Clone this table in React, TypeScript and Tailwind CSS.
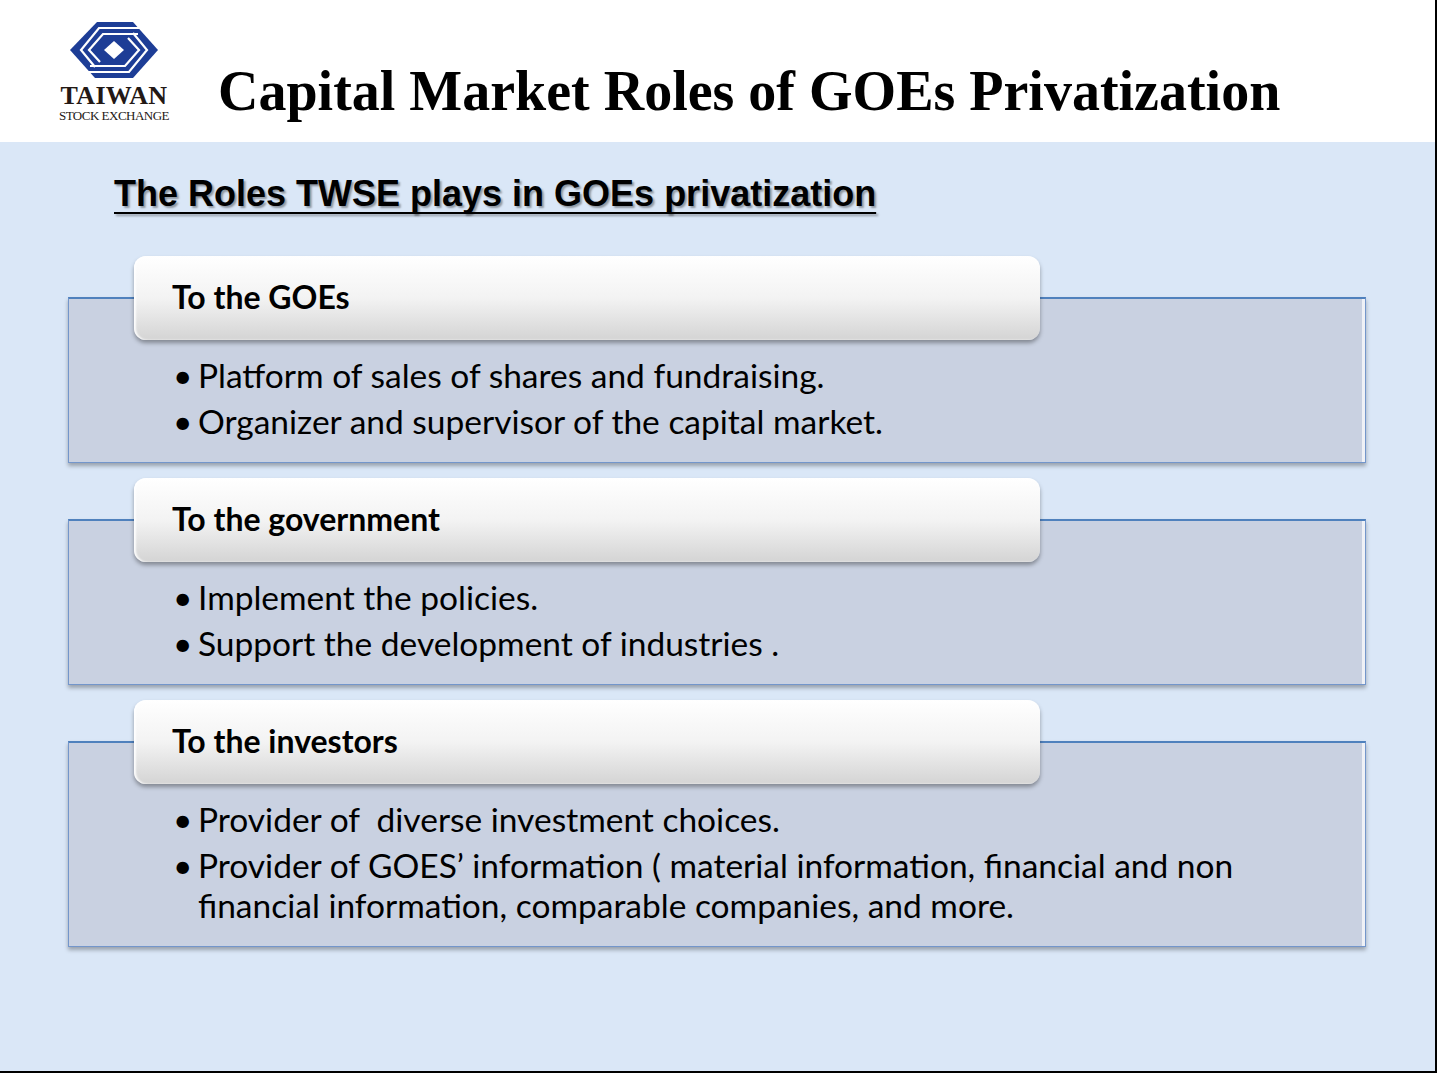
import React from 'react';

interface Role {
  title: string;
  height: string;
  items: React.ReactNode[];
}

const roles: Role[] = [
  {
    title: 'To the GOEs',
    height: 'h-[166px]',
    items: [
      'Platform of sales of shares and fundraising.',
      'Organizer and supervisor of the capital market.',
    ],
  },
  {
    title: 'To the government',
    height: 'h-[166px]',
    items: ['Implement the policies.', 'Support the development of industries .'],
  },
  {
    title: 'To the investors',
    height: 'h-[206px]',
    items: [
      'Provider of \u00a0diverse investment choices.',
      <>
        Provider of GOES’ information ( material information, financial and non
        <br />
        financial information, comparable companies, and more.
      </>,
    ],
  },
];

const Logo = () => (
  <div className="flex flex-col items-center w-[112px]">
    <svg width="88" height="56" viewBox="0 0 88 56" className="block">
      <polygon points="0,28 27,0 63,0 88,28 63,56 25,56" fill="#1d3d96" />
      {/* upper-left C */}
      <polyline points="76,6 29,6 11,28 25,45" fill="none" stroke="#fff" strokeWidth="2.2" />
      <polyline points="68,12 33,12 19,28 30,40" fill="none" stroke="#fff" strokeWidth="2.2" />
      {/* lower-right C */}
      <polyline points="12,50 59,50 77,28 63,11" fill="none" stroke="#fff" strokeWidth="2.2" />
      <polyline points="20,44 55,44 69,28 58,16" fill="none" stroke="#fff" strokeWidth="2.2" />
      <polygon points="44,19 54,28 44,37 34,28" fill="#fff" />
    </svg>
    <div className="mt-[7px] text-[26px] leading-[22px] font-bold tracking-[0.3px] text-[#231815] [font-family:'Liberation_Serif',serif]">
      TAIWAN
    </div>
    <div className="mt-[2px] text-[13px] leading-[14px] tracking-[-0.5px] text-[#231815] [font-family:'Liberation_Serif',serif]">
      STOCK EXCHANGE
    </div>
  </div>
);

const RoleBlock = ({ role, first }: { role: Role; first: boolean }) => (
  <div className={first ? '' : 'mt-[15px]'}>
    <div className="relative z-10 ml-[66px] w-[906px] h-[84px] flex items-center pl-[38px] pb-[2px] rounded-[12px] bg-linear-to-b from-white via-[#f3f3f3] to-[#d4d4d4] shadow-[0_3px_4px_rgba(0,0,0,0.35),inset_2px_0_2px_rgba(255,255,255,0.9)]">
      <span className="text-[32px] font-bold text-black [font-family:Lato,sans-serif]">{role.title}</span>
    </div>
    <div
      className={`-mt-[43px] w-[1298px] ${role.height} pt-[56px] pl-[104px] bg-[#c9d1e1] border border-[#7396cb] border-t-2 border-t-[#4f81bd] shadow-[inset_-3px_0_0_rgba(255,255,255,0.7),0_3px_4px_rgba(0,0,0,0.3)]`}
    >
      <ul className="flex flex-col gap-[6px] text-[33.5px] leading-[40px] text-black [font-family:Lato,sans-serif]">
        {role.items.map((item, i) => (
          <li key={i} className="flex">
            <span className="w-[25px] shrink-0">•</span>
            <span>{item}</span>
          </li>
        ))}
      </ul>
    </div>
  </div>
);

export default function App() {
  return (
    <div className="w-[1437px] h-[1073px] flex flex-col border-r-2 border-b-2 border-black overflow-hidden">
      <header className="h-[142px] shrink-0 bg-white flex items-start">
        <div className="ml-[58px] mt-[22px]">
          <Logo />
        </div>
        <h1 className="ml-[48px] mt-[59px] text-[56px] leading-[64px] font-bold text-black [font-family:'Liberation_Serif',serif]">
          Capital Market Roles of GOEs Privatization
        </h1>
      </header>
      <main className="flex-1 bg-[#dae7f7] pl-[68px] pt-[31px]">
        <h2 className="ml-[46px] inline-block text-[36px] leading-[42px] font-bold text-black underline decoration-2 underline-offset-[6px] [text-decoration-skip-ink:none] [font-family:'Liberation_Sans',sans-serif] [text-shadow:2px_2px_2px_rgba(0,0,0,0.35)]">
          The Roles TWSE plays in GOEs privatization
        </h2>
        <div className="mt-[41px]">
          {roles.map((role, i) => (
            <RoleBlock key={role.title} role={role} first={i === 0} />
          ))}
        </div>
      </main>
    </div>
  );
}
